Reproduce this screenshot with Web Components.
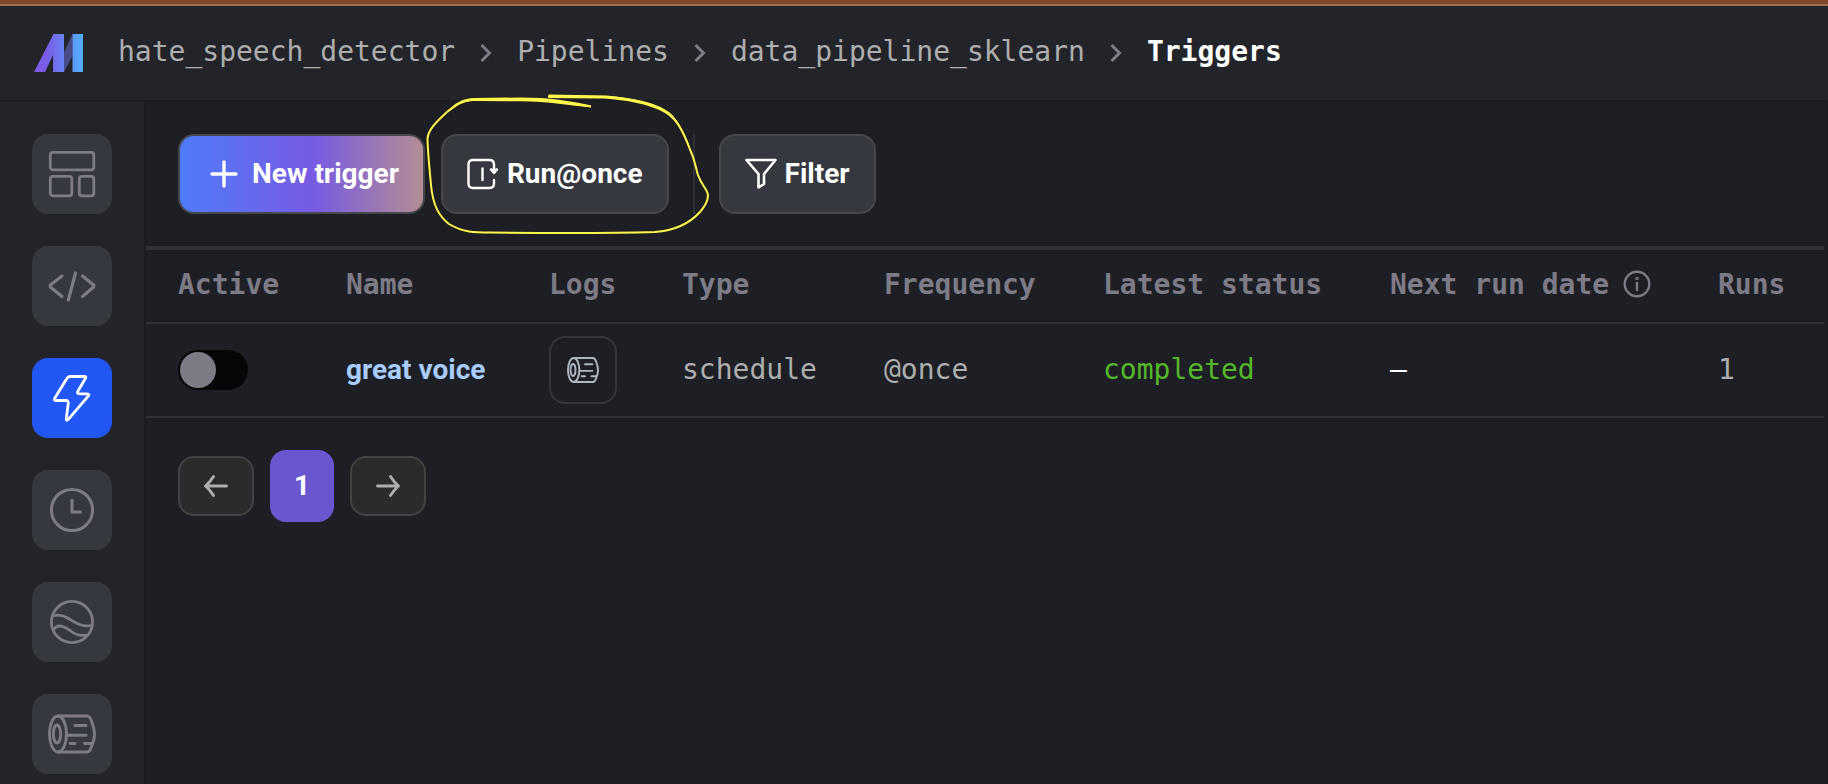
<!DOCTYPE html>
<html lang="en">
<head>
<meta charset="utf-8">
<title>Triggers</title>
<style>
html, body { margin: 0; height: 100%; }
body { background: #1e1f24; font-family: "DejaVu Sans Mono", monospace; font-size: 28px; color: #aeaeae; overflow: hidden; }
</style>
</head>
<body>
<mage-app></mage-app>
<script>
const ICONS = {
  layout: '<svg width="48" height="48" viewBox="0 0 48 48" fill="none" stroke="currentColor" stroke-width="2.8"><rect x="2.3" y="2.3" width="43.5" height="17.5" rx="2.5"/><rect x="2.3" y="26.3" width="21.5" height="19.5" rx="2.5"/><rect x="31.3" y="26.3" width="14.5" height="19.5" rx="2.5"/></svg>',
  code: '<svg width="48" height="48" viewBox="0 0 48 48" fill="none" stroke="currentColor" stroke-width="3.2" stroke-linecap="round" stroke-linejoin="round"><path d="M14 14 2.700 22.800q-1.300 1.200 0 2.400L14 34.500M34.500 14 45.300 22.800q1.300 1.200 0 2.400L34.500 34.500M27.500 11 20.300 38"/></svg>',
  bolt: '<svg width="48" height="48" viewBox="0 0 48 48" fill="none" stroke="currentColor" stroke-width="2.8" stroke-linecap="round" stroke-linejoin="round"><path d="M22 2.500h14.500q2 0 1 1.800L30.300 16.500Q28.300 19.800 31.500 19.800H39q3.200 0 1 2.600L20.300 45.300q-2.300 2.200-2-.8L20.300 29q.1-2.500-2.300-2.500H8.500q-3.200 0-1.600-2.500L18.500 5Q20 2.500 22 2.500Z"/></svg>',
  clock: '<svg width="48" height="48" viewBox="0 0 48 48" fill="none" stroke="currentColor" stroke-width="3" stroke-linecap="round" stroke-linejoin="round"><circle cx="24" cy="24" r="20.600"/><path d="M24 14v12h8.500"/></svg>',
  wave: '<svg width="48" height="48" viewBox="0 0 48 48" fill="none" stroke="currentColor" stroke-width="2.800"><circle cx="24" cy="24" r="20.600"/><path d="M4.500 18C20 13 26 31 44 27.500M5.500 32C10 24 19 30 22 32.500Q30 39 39.500 37"/></svg>',
  log: '<svg viewBox="0 0 48 48" fill="none" stroke="currentColor" stroke-width="2.900" stroke-linecap="round"><ellipse cx="10" cy="24" rx="8.500" ry="18"/><ellipse cx="9" cy="24" rx="3.700" ry="9"/><path d="M10 6H39Q42 6 44 12.500Q49 24 44 35.500Q42 42 39 42H10M19 25.300H38M27 15.500H38M22 33.500H27M36.500 33.500H44"/></svg>',
  plus: '<svg width="28" height="28" viewBox="0 0 28 28" fill="none" stroke="currentColor" stroke-width="3.400" stroke-linecap="round"><path d="M14 2V26M2 14H26"/></svg>',
  once: '<svg width="32" height="32" viewBox="0 0 32 32" fill="none" stroke="currentColor" stroke-width="2.400" stroke-linecap="round" stroke-linejoin="round"><path d="M27 22V25.500q0 4.500-4.500 4.500H6q-4.500 0-4.500-4.500V6.500Q1.500 2 6 2H22.500Q27 2 27 6.500V14M15.500 10.500V22"/><path d="M24 11.500 27 15 30 11.500 27 12.500Z" fill="currentColor"/></svg>',
  filter: '<svg width="32" height="32" viewBox="0 0 32 32" fill="none" stroke="currentColor" stroke-width="2.600" stroke-linejoin="round"><path d="M1.500 2H30.500L19 16V26L13.500 29.500V16Z"/></svg>',
  left: '<svg width="24" height="24" viewBox="0 0 24 24" fill="none" stroke="currentColor" stroke-width="2.900" stroke-linecap="round" stroke-linejoin="round"><path d="M22.500 12H2M9.500 2.500Q6 8 1.500 12Q6 16 9.500 21.500"/></svg>',
  right: '<svg width="24" height="24" viewBox="0 0 24 24" fill="none" stroke="currentColor" stroke-width="2.900" stroke-linecap="round" stroke-linejoin="round"><path d="M1.500 12H22M14.500 2.500Q18 8 22.500 12Q18 16 14.500 21.500"/></svg>',
  chevron: '<svg width="12" height="18" viewBox="0 0 12 18" fill="none" stroke="currentColor" stroke-width="3"><path d="M1.500 1 9.500 9 1.500 17"/></svg>',
  info: '<svg width="28" height="28" viewBox="0 0 28 28" fill="none" stroke="currentColor" stroke-width="2.400" stroke-linecap="round"><circle cx="14" cy="14" r="12.300"/><path d="M14 13V20"/><circle cx="14" cy="8.500" r=".6"/></svg>',
  logo: '<svg width="50" height="38" viewBox="0 0 50 38"><defs><linearGradient id="g" x1="0" x2="50" y1="0" y2="0" gradientUnits="userSpaceOnUse"><stop offset=".25" stop-color="#7a5ce6"/><stop offset="1" stop-color="#4fb1ff"/></linearGradient></defs><path d="M30 18 38.500 0V22L30 38Z" fill="#474b86"/><path d="M0 38 19.500 0H30V38H19V21L11 38Z" fill="url(#g)"/><path d="M38.500 0H49V38H38.500Z" fill="url(#g)"/></svg>'
};
function define(name, css, html) {
  customElements.define(name, class extends HTMLElement {
    constructor() {
      super();
      const label = this.getAttribute('label') || '';
      this.attachShadow({ mode: 'open' }).innerHTML =
        '<style>*{box-sizing:border-box}' + css + '</style>' + (typeof html === 'function' ? html(this, label) : html);
    }
  });
}
define('mage-icon', ':host{display:flex;flex:none}svg{display:block;width:var(--icon-w,auto);height:var(--icon-h,auto)}', el => ICONS[el.getAttribute('name')]);

define('mage-header', `
:host{display:block;border-top:4px solid #7e4728;background:#232429}
header{display:flex;align-items:center;gap:34px;height:98px;padding:0 34px;border-top:2px solid #9c7352;border-bottom:2px solid #1b1c1f}
.logo{display:flex}
nav{display:flex;align-items:center;gap:25px;white-space:nowrap}
a{color:#aeaeae;text-decoration:none}
nav a{padding-bottom:4px}
a[aria-current]{color:#fff;font-weight:700}
mage-icon{color:#7d7b86}`, `
<header><a class="logo" href="#" aria-label="Home"><mage-icon name="logo"></mage-icon></a>
<nav aria-label="Breadcrumb"><a href="#">hate_speech_detector</a><mage-icon name="chevron"></mage-icon><a href="#">Pipelines</a><mage-icon name="chevron"></mage-icon><a href="#">data_pipeline_sklearn</a><mage-icon name="chevron"></mage-icon><a href="#" aria-current="page">Triggers</a></nav></header>`);

define('mage-nav-item', `
:host{display:block}
a{display:flex;align-items:center;justify-content:center;width:80px;height:80px;border-radius:16px;background:#36383f;color:#7d7b86;--icon-w:48px;--icon-h:48px}
:host([active]) a{background:#2157f5;color:#fff}`,
(el, label) => `<a href="#" aria-label="${label}"><mage-icon name="${el.getAttribute('icon')}"></mage-icon></a>`);

define('mage-sidebar', `
:host{display:block;flex:none;background:#232429;border-right:2px solid #1b1c1f}
nav{display:flex;flex-direction:column;gap:32px;padding:32px}`, `
<nav aria-label="Pipeline">
<mage-nav-item icon="layout" label="Dashboard"></mage-nav-item>
<mage-nav-item icon="code" label="Edit pipeline"></mage-nav-item>
<mage-nav-item icon="bolt" label="Triggers" active></mage-nav-item>
<mage-nav-item icon="clock" label="Runs"></mage-nav-item>
<mage-nav-item icon="wave" label="Backfills"></mage-nav-item>
<mage-nav-item icon="log" label="Logs"></mage-nav-item></nav>`);

define('mage-button', `
:host{display:block}
button{display:flex;align-items:center;gap:8px;height:80px;padding:0 24px;border:2px solid #46484d;border-radius:16px;background:#36383f;color:#fff;font:700 28px/36px Roboto,sans-serif;white-space:nowrap}
:host([primary]) button{gap:14px;padding:0 24px 0 30px;background:linear-gradient(90deg,#4f7bfb,#775be3 55%,#b38d92) padding-box,#46484d border-box;border-color:transparent}`,
el => `<button type="button"><mage-icon name="${el.getAttribute('icon')}"></mage-icon><slot></slot></button>`);

define('mage-toolbar', `
:host{display:flex;align-items:stretch;padding:32px}
.first{margin-right:16px}
hr{width:2px;margin:0 24px;border:0;background:#303135}
.marked{position:relative}
.ink{position:absolute;left:-15px;top:-40px;width:286px;height:142px;overflow:visible;pointer-events:none}`, `
<mage-button class="first" primary icon="plus">New trigger</mage-button>
<div class="marked"><mage-button icon="once">Run@once</mage-button>
<svg class="ink" viewBox="426 94 286 142" fill="#fff84a" aria-hidden="true"><path d="M590 106.300C565 102.500 545 99.500 520 99.500L472 99.700C462 100.500 456 105 447 112C436 122 427 131 427.500 140C428 155 429.500 168 431 185C433 207 440 217 449 224C463 232.500 475 232.500 490 232.500C540 233 600 233.500 655 232C675 230.500 690 223 700 212C706 205 709 198 707.500 193C706 188 701 184 698 175C695 165 695 160 690 149.500C683 131 676 117 664 110C650 102 630 98.500 606 97L549 96.500" fill="none" stroke="#fff84a" stroke-width="2" stroke-linecap="round"/><path d="M548.500 94.500 606 95.500C635 98 655 104 668 111.500C678 118 687 138 691 150C683 134 678 121 665 113C650 104 625 100 605 98.500L548.500 98Z"/><path d="M591 105.500C570 101 550 97.500 520 97.500L475 98C463 98 455 103 445 113C455 105 462 101.500 474 101L520 101.300C550 101.500 570 105.500 591 107.500Z"/></svg></div>
<hr>
<mage-button icon="filter">Filter</mage-button>`);

define('mage-table', `
:host{display:block;margin-right:2px}
table{width:100%;border-collapse:separate;border-spacing:0;border-top:4px solid #303135;table-layout:fixed}
th,td{padding:0 0 0 32px;text-align:left;border-bottom:2px solid #303135;white-space:nowrap}
th{height:74px;padding-bottom:4px;color:#7d7b86;font-weight:700}
td{height:94px}
.text{padding-bottom:2px}
.head{display:flex;align-items:center;gap:14px}
.name{color:#a8cdff;font:700 28px/36px Roboto,sans-serif;text-decoration:none}
.ok{color:#55b82b}
.none{color:#fff}
input{appearance:none;display:block;width:70px;height:40px;margin:0;padding:2px;border-radius:20px;background:#060606}
input::before{content:"";display:block;width:36px;height:36px;border-radius:50%;background:#7d7b86}
button{display:flex;align-items:center;justify-content:center;width:68px;height:68px;padding:0;border:2px solid #35363a;border-radius:16px;background:none;color:#aeb6c2;--icon-w:32px;--icon-h:32px}`, `
<table><colgroup><col style="width:168px"><col style="width:203px"><col style="width:133px"><col style="width:202px"><col style="width:219px"><col style="width:287px"><col style="width:328px"><col></colgroup>
<thead><tr><th>Active</th><th>Name</th><th>Logs</th><th>Type</th><th>Frequency</th><th>Latest status</th><th><div class="head">Next run date<mage-icon name="info"></mage-icon></div></th><th>Runs</th></tr></thead>
<tbody><tr><td><input type="checkbox" role="switch" aria-label="Active"></td><td><a class="name" href="#">great voice</a></td><td><button type="button" aria-label="View logs"><mage-icon name="log"></mage-icon></button></td><td class="text">schedule</td><td class="text">@once</td><td class="text ok">completed</td><td class="text none">—</td><td class="text">1</td></tr></tbody></table>`);

define('mage-pagination', `
:host{display:flex;align-items:center;gap:16px;padding:32px}
button{display:flex;align-items:center;justify-content:center;width:76px;height:60px;padding:0;border:2px solid #434343;border-radius:16px;background:#2b2b2b;color:#aeaeae}
.page{width:64px;height:72px;border:0;background:#6a57d0;color:#fff;font:700 28px/36px Roboto,sans-serif}`, `
<button type="button" aria-label="Previous page"><mage-icon name="left"></mage-icon></button>
<button type="button" class="page" aria-current="page">1</button>
<button type="button" aria-label="Next page"><mage-icon name="right"></mage-icon></button>`);

define('mage-app', `
:host{display:flex;flex-direction:column;min-height:100vh}
.body{display:flex;flex:1}
main{flex:1;min-width:0;border-right:2px solid #1b1c1f}`, `
<mage-header></mage-header>
<div class="body"><mage-sidebar></mage-sidebar>
<main><mage-toolbar></mage-toolbar><mage-table></mage-table><mage-pagination></mage-pagination></main></div>`);
</script>
</body>
</html>
